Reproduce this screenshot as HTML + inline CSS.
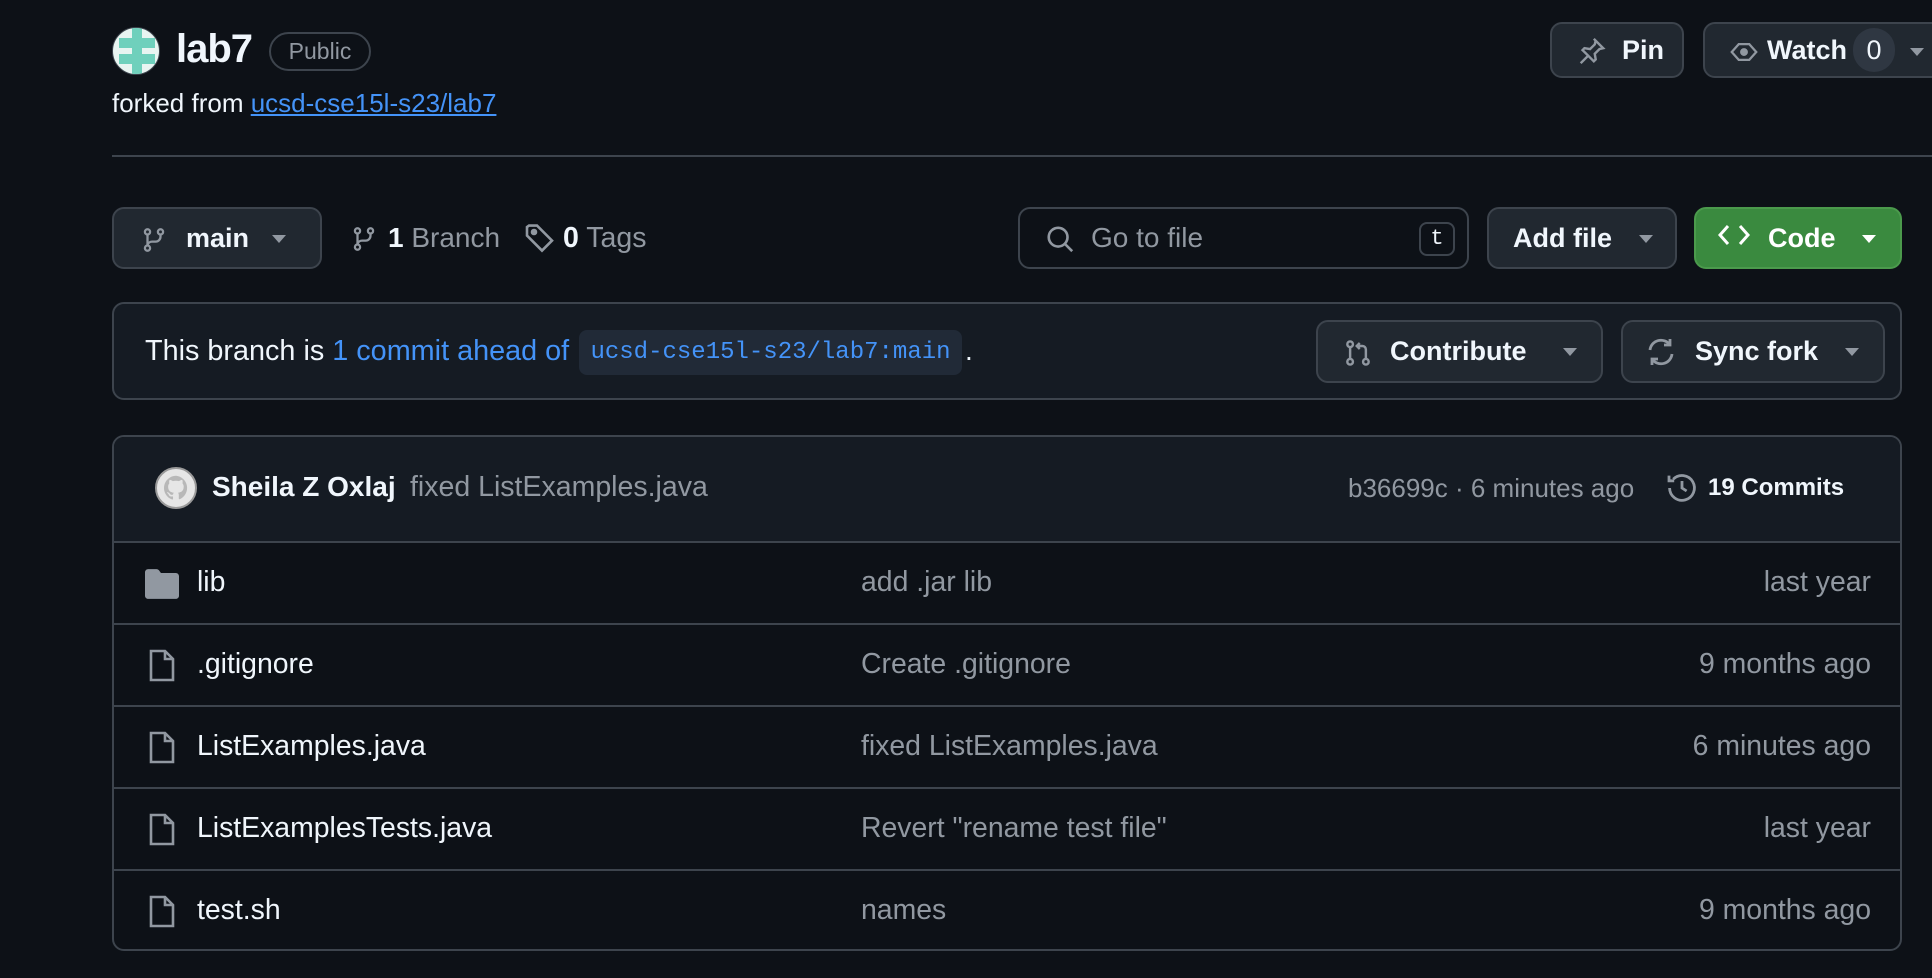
<!DOCTYPE html>
<html><head><meta charset="utf-8"><style>
*{box-sizing:border-box;margin:0;padding:0}
body{width:1932px;height:978px;overflow:hidden;background:#0d1117;color:#f0f6fc;font-family:"Liberation Sans",sans-serif;position:relative}
.a{position:absolute}
.btn{position:absolute;background:#212830;border:2px solid #3d444d;border-radius:12px;display:flex;align-items:center;color:#f0f6fc;font-weight:bold;font-size:27px}
.caret{width:0;height:0;border-left:7px solid transparent;border-right:7px solid transparent;border-top:8px solid #9198a1;position:absolute}
svg{position:absolute}
.muted{color:#9198a1}
.row{position:absolute;left:112px;width:1790px;height:82px;border-top:2px solid #3d444d;font-size:28.4px}
.row .n{position:absolute;left:85px;top:23px}
.row .m{position:absolute;left:749px;top:23px;color:#9198a1}
.row .d{position:absolute;right:31px;top:23px;color:#9198a1}
</style></head><body>
<div class="a" style="left:112px;top:27px;width:48px;height:48px;border-radius:50%;background:#e8f4f1;overflow:hidden;border:1px solid #3d444d">
<div class="a" style="left:6px;top:10px;width:36px;height:10px;background:#6fd0bc"></div>
<div class="a" style="left:6px;top:26px;width:36px;height:10px;background:#6fd0bc"></div>
<div class="a" style="left:19px;top:0;width:10px;height:48px;background:#6fd0bc"></div>
<div class="a" style="left:6px;top:20px;width:10px;height:6px;background:#e8f4f1"></div>
<div class="a" style="left:32px;top:20px;width:10px;height:6px;background:#e8f4f1"></div>
</div>
<div class="a" style="left:176px;top:27px;font-size:40px;font-weight:bold;letter-spacing:-1px">lab7</div>
<div class="a muted" style="left:269px;top:32px;width:102px;height:39px;border:2px solid #3d444d;border-radius:20px;font-size:23px;text-align:center;line-height:35px">Public</div>
<div class="a" style="left:112px;top:88px;font-size:26px">forked from <span style="color:#4493f8;text-decoration:underline">ucsd-cse15l-s23/lab7</span></div>
<div class="a" style="left:112px;top:155px;width:1820px;height:2px;background:#3d444d"></div>

<div class="btn" style="left:1550px;top:22px;width:134px;height:56px">
<svg style="left:24px;top:12px" width="30" height="30" viewBox="0 0 16 16" fill="none" stroke="#9198a1" stroke-width="1.3"><path d="M9.5 1.5l5 5-2 .5-2.5 2.5.5 3-1 1-3-3-4 4M6.5 10.5l-3-3 1-1 3 .5L10 4.5l.5-2"/></svg>
<span style="position:absolute;left:70px">Pin</span></div>
<div class="btn" style="left:1703px;top:22px;width:250px;height:56px">
<svg style="left:24px;top:14px" width="30" height="28" viewBox="0 0 16 16" fill="none" stroke="#9198a1" stroke-width="1.3"><path d="M1 8l4-4.5h6L15 8l-4 4.5H5z"/><circle cx="8" cy="8" r="1.6" fill="#9198a1"/></svg>
<span style="position:absolute;left:62px">Watch</span>
<span style="position:absolute;left:148px;top:4px;width:42px;height:44px;border-radius:22px;background:#2f3742;text-align:center;line-height:44px;font-weight:normal">0</span>
<div class="caret" style="left:205px;top:24px"></div></div>

<div class="btn" style="left:112px;top:207px;width:210px;height:62px">
<svg style="left:27px;top:17px" width="26" height="28" viewBox="0 0 16 16" fill="none" stroke="#9198a1" stroke-width="1.4"><circle cx="4" cy="3" r="1.6"/><circle cx="4" cy="13" r="1.6"/><circle cx="12" cy="3" r="1.6"/><path d="M4 4.6v6.8M12 4.6v1.4a3 3 0 0 1-3 3H7a3 3 0 0 0-3 2"/></svg>
<span style="position:absolute;left:72px">main</span>
<div class="caret" style="left:158px;top:26px"></div></div>
<svg style="left:351px;top:224px" width="26" height="30" viewBox="0 0 16 16" fill="none" stroke="#9198a1" stroke-width="1.4"><circle cx="4" cy="3" r="1.6"/><circle cx="4" cy="13" r="1.6"/><circle cx="12" cy="3" r="1.6"/><path d="M4 4.6v6.8M12 4.6v1.4a3 3 0 0 1-3 3H7a3 3 0 0 0-3 2"/></svg>
<div class="a" style="left:388px;top:222px;font-size:28px"><b>1</b> <span class="muted">Branch</span></div>
<svg style="left:524px;top:222px" width="32" height="32" viewBox="0 0 16 16" fill="none" stroke="#9198a1" stroke-width="1.3"><path d="M1.5 2.5v4.3l7.5 7.5 5-5-7.5-7.5H2.5z"/><circle cx="5" cy="5" r="1" fill="#9198a1"/></svg>
<div class="a" style="left:563px;top:222px;font-size:28.5px"><b>0</b> <span class="muted">Tags</span></div>

<div class="a" style="left:1018px;top:207px;width:451px;height:62px;border:2px solid #3d444d;border-radius:12px">
<svg style="left:25px;top:14px" width="30" height="32" viewBox="0 0 16 16" fill="none" stroke="#9198a1" stroke-width="1.4"><circle cx="7" cy="7" r="5"/><path d="M10.6 10.6L14.5 14.5"/></svg>
<span class="a muted" style="left:71px;top:13px;font-size:28px">Go to file</span>
<span class="a" style="left:399px;top:13px;width:36px;height:34px;border:2px solid #3d444d;border-radius:8px;font-family:'Liberation Mono',monospace;font-size:22px;text-align:center;line-height:30px;color:#f0f6fc">t</span></div>
<div class="btn" style="left:1487px;top:207px;width:190px;height:62px"><span style="position:absolute;left:24px">Add file</span><div class="caret" style="left:150px;top:26px"></div></div>
<div class="btn" style="left:1694px;top:207px;width:208px;height:62px;background:#3a8a3f;border-color:#4b9a4c;color:#fff">
<svg style="left:22px;top:14px" width="32" height="24" viewBox="0 0 16 12" fill="none" stroke="#fff" stroke-width="1.5"><path d="M5 1.5L1 6l4 4.5M11 1.5L15 6l-4 4.5"/></svg>
<span style="position:absolute;left:72px">Code</span><div class="caret" style="left:166px;top:26px;border-top-color:#fff"></div></div>

<div class="a" style="left:112px;top:302px;width:1790px;height:98px;border:2px solid #3d444d;border-radius:12px;background:#151b23"></div>
<div class="a" style="left:145px;top:335px;font-size:28.8px">This branch is <span style="color:#4493f8">1 commit ahead of</span></div>
<div class="a" style="left:579px;top:330px;width:383px;height:45px;background:#212a37;border-radius:8px;color:#4493f8;font-family:'Liberation Mono',monospace;font-size:24px;text-align:center;line-height:45px">ucsd-cse15l-s23/lab7:main</div>
<div class="a" style="left:965px;top:335px;font-size:28px">.</div>
<div class="btn" style="left:1316px;top:320px;width:287px;height:63px">
<svg style="left:26px;top:15px" width="28" height="32" viewBox="0 0 16 16" fill="none" stroke="#9198a1" stroke-width="1.4"><circle cx="3.5" cy="3" r="1.6"/><circle cx="3.5" cy="13" r="1.6"/><circle cx="12.5" cy="13" r="1.6"/><path d="M3.5 4.6v6.8M12.5 11.4V6a2 2 0 0 0-2-2H7.5M9 2.3L7.3 4 9 5.7"/></svg>
<span style="position:absolute;left:72px">Contribute</span><div class="caret" style="left:245px;top:26px"></div></div>
<div class="btn" style="left:1621px;top:320px;width:264px;height:63px">
<svg style="left:22px;top:14px" width="32" height="32" viewBox="0 0 16 16" fill="none" stroke="#9198a1" stroke-width="1.4"><path d="M2.5 7a5.5 5.5 0 0 1 10-2.5M13.5 9a5.5 5.5 0 0 1-10 2.5M12.5 1.5v3h-3M3.5 14.5v-3h3"/></svg>
<span style="position:absolute;left:72px">Sync fork</span><div class="caret" style="left:222px;top:26px"></div></div>

<div class="a" style="left:112px;top:435px;width:1790px;height:516px;border:2px solid #3d444d;border-radius:12px;overflow:hidden">
<div class="a" style="left:0;top:0;width:1790px;height:106px;background:#151b23"></div></div>
<div class="a" style="left:155px;top:467px;width:42px;height:42px;border-radius:50%;background:#e6e6e6;border:2px solid #9a9a9a"><svg style="left:5px;top:4px" width="28" height="30" viewBox="0 0 16 16"><path fill="#b8b8b8" d="M8 1a7 7 0 0 0-2.2 13.6c.3 0 .5-.2.5-.4v-1.4c-2 .4-2.4-.9-2.4-.9-.3-.8-.8-1-.8-1-.6-.5.1-.5.1-.5.7 0 1.1.7 1.1.7.6 1.1 1.700.8 2 .6.1-.5.3-.8.5-1-1.6-.2-3.3-.8-3.3-3.5 0-.8.3-1.4.7-1.9 0-.2-.3-.9.1-1.9 0 0 .6-.2 1.9.7a6.6 6.6 0 0 1 3.5 0c1.3-.9 1.9-.7 1.9-.7.4 1 .1 1.7.1 1.9.4.5.7 1.1.7 1.9 0 2.7-1.7 3.3-3.3 3.5.3.2.5.7.5 1.3v2c0 .2.2.5.5.4A7 7 0 0 0 8 1z"/></svg></div>
<div class="a" style="left:212px;top:471px;font-size:28px;font-weight:bold">Sheila Z Oxlaj</div>
<div class="a muted" style="left:410px;top:471px;font-size:28.5px">fixed ListExamples.java</div>
<div class="a muted" style="left:1348px;top:473px;font-size:26px">b36699c · 6 minutes ago</div>
<svg style="left:1666px;top:472px" width="32" height="32" viewBox="0 0 16 16" fill="none" stroke="#9198a1" stroke-width="1.4"><path d="M1.8 8A6.2 6.2 0 1 0 3.6 3.6M1.5 1.8v2.6h2.6M8 4.5V8l2.3 1.5"/></svg>
<div class="a" style="left:1708px;top:474px;font-size:24px;font-weight:bold">19 Commits</div>

<div class="row" style="top:541px"><svg style="left:33px;top:26px" width="34" height="30" viewBox="0 0 16 14"><path fill="#9198a1" d="M0 1.5C0 .7.7 0 1.5 0h3.9c.5 0 .9.2 1.2.6l.9 1.2h7c.8 0 1.5.7 1.5 1.5v9.2c0 .8-.7 1.5-1.5 1.5h-13C.7 14 0 13.3 0 12.5z"/></svg><span class="n">lib</span><span class="m">add .jar lib</span><span class="d">last year</span></div>
<div class="row" style="top:623px"><svg style="left:36px;top:24px" width="28" height="34" viewBox="0 0 14 17" fill="none" stroke="#9198a1" stroke-width="1.3"><path d="M1.5 1h7l4 4v10.5h-11zM8.5 1v4h4"/></svg><span class="n">.gitignore</span><span class="m">Create .gitignore</span><span class="d">9 months ago</span></div>
<div class="row" style="top:705px"><svg style="left:36px;top:24px" width="28" height="34" viewBox="0 0 14 17" fill="none" stroke="#9198a1" stroke-width="1.3"><path d="M1.5 1h7l4 4v10.5h-11zM8.5 1v4h4"/></svg><span class="n">ListExamples.java</span><span class="m">fixed ListExamples.java</span><span class="d">6 minutes ago</span></div>
<div class="row" style="top:787px"><svg style="left:36px;top:24px" width="28" height="34" viewBox="0 0 14 17" fill="none" stroke="#9198a1" stroke-width="1.3"><path d="M1.5 1h7l4 4v10.5h-11zM8.5 1v4h4"/></svg><span class="n">ListExamplesTests.java</span><span class="m">Revert "rename test file"</span><span class="d">last year</span></div>
<div class="row" style="top:869px"><svg style="left:36px;top:24px" width="28" height="34" viewBox="0 0 14 17" fill="none" stroke="#9198a1" stroke-width="1.3"><path d="M1.5 1h7l4 4v10.5h-11zM8.5 1v4h4"/></svg><span class="n">test.sh</span><span class="m">names</span><span class="d">9 months ago</span></div>
</body></html>
